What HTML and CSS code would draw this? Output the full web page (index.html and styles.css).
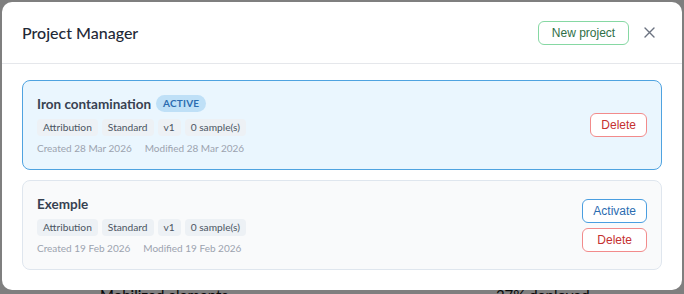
FILE: index.html
```html
<!DOCTYPE html>
<html>
<head>
<meta charset="utf-8">
<link rel="stylesheet" href="styles.css">
</head>
<body>
<div class="page">
  <div class="page-row"><span class="pl">Mobilized elements</span><span class="pr">37% deployed</span></div>
</div>
<div class="overlay">
  <div class="modal">
    <div class="modal-header">
      <h2 class="modal-title">Project Manager</h2>
      <div class="header-actions">
        <button class="btn btn-green">New project</button>
        <button class="close" aria-label="Close">
          <svg width="11" height="11" viewBox="0 0 11 11"><path d="M1 1L10 10M10 1L1 10" stroke="#6b7280" stroke-width="1.4" stroke-linecap="round"/></svg>
        </button>
      </div>
    </div>
    <div class="modal-body">
      <div class="card card-active">
        <div class="card-info">
          <div class="card-title"><span class="name">Iron contamination</span><span class="badge">ACTIVE</span></div>
          <div class="tags"><span class="tag">Attribution</span><span class="tag">Standard</span><span class="tag">v1</span><span class="tag">0 sample(s)</span></div>
          <div class="dates"><span>Created 28 Mar 2026</span><span>Modified 28 Mar 2026</span></div>
        </div>
        <div class="card-actions">
          <button class="btn btn-red">Delete</button>
        </div>
      </div>
      <div class="card">
        <div class="card-info">
          <div class="card-title"><span class="name">Exemple</span></div>
          <div class="tags"><span class="tag">Attribution</span><span class="tag">Standard</span><span class="tag">v1</span><span class="tag">0 sample(s)</span></div>
          <div class="dates"><span>Created 19 Feb 2026</span><span>Modified 19 Feb 2026</span></div>
        </div>
        <div class="card-actions">
          <button class="btn btn-blue">Activate</button>
          <button class="btn btn-red">Delete</button>
        </div>
      </div>
    </div>
  </div>
</div>
</body>
</html>
```
FILE: styles.css
```css
* { box-sizing: border-box; }
html, body { margin: 0; padding: 0; }
body {
  width: 684px;
  height: 294px;
  overflow: hidden;
  background: #ffffff;
  font-family: Lato, "Noto Sans", sans-serif;
  position: relative;
}
.page {
  height: 294px;
  padding-top: 286px;
}
.page-row {
  font-size: 15px;
  color: #111;
  font-family: Lato, sans-serif;
}
.pl { margin-left: 100px; }
.pr { margin-left: 268px; }
.overlay {
  position: absolute;
  inset: 0;
  background: rgba(0, 0, 0, 0.5);
  padding: 2px 2px 0 2px;
}
.modal {
  background: #ffffff;
  border-radius: 10px;
  width: 680px;
  height: 288px;
  overflow: hidden;
}
.modal-header {
  display: flex;
  align-items: center;
  justify-content: space-between;
  height: 62px;
  padding: 0 27px 0 20px;
  border-bottom: 1px solid #e5e7eb;
}
.modal-title {
  margin: 0;
  font-size: 16px;
  font-weight: 500;
  color: #1f2937;
}
.header-actions {
  display: flex;
  align-items: center;
  gap: 15px;
}
.close {
  border: 0;
  background: none;
  padding: 0;
  width: 11px;
  height: 11px;
  display: flex;
}
.btn {
  font-family: "Liberation Sans", Arial, sans-serif;
  font-size: 12px;
  background: #ffffff;
  border-radius: 6px;
  height: 24px;
  padding: 0 10px;
  border: 1px solid;
  cursor: pointer;
}
.btn-green { border-color: #86d8a3; color: #2f6f47; width: 91px; }
.btn-red { border-color: #f28b8b; color: #c53030; }
.btn-blue { border-color: #4a9ee0; color: #2b6cb0; }
.modal-body {
  padding: 16px 20px 20px;
  display: flex;
  flex-direction: column;
  gap: 10px;
}
.card {
  display: flex;
  align-items: center;
  justify-content: space-between;
  height: 90px;
  padding: 0 14px;
  border: 1px solid #dfe6ee;
  border-radius: 8px;
  background: #f9fafb;
}
.card-active {
  background: #eaf6fe;
  border-color: #4fa3e0;
}
.card-info {
  display: flex;
  flex-direction: column;
}
.card-title {
  display: flex;
  align-items: center;
  gap: 5px;
  height: 18px;
}
.name {
  font-size: 13.5px;
  font-weight: 700;
  color: #374151;
}
.badge {
  font-size: 10px;
  font-weight: 700;
  color: #2b6cb0;
  background: #bfe0f7;
  border-radius: 9px;
  padding: 0 7px;
  height: 17px;
  line-height: 17px;
  letter-spacing: 0.2px;
}
.tags {
  display: flex;
  gap: 4px;
  margin-top: 6px;
}
.tag {
  font-size: 10.2px;
  color: #4b5563;
  background: #edf1f5;
  border-radius: 4px;
  height: 17px;
  line-height: 17px;
  padding: 0 6px;
}
.dates {
  display: flex;
  gap: 13px;
  margin-top: 4px;
  font-size: 10px;
  color: #9ca3af;
  height: 16px;
  line-height: 16px;
}
.card-actions {
  display: flex;
  flex-direction: column;
  gap: 5px;
}
```
